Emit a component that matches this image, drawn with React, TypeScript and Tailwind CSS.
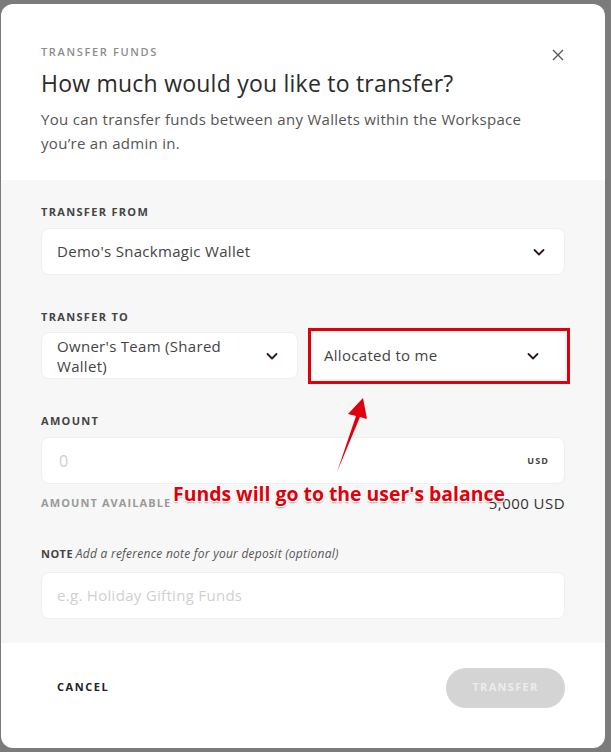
import React from 'react';

const font = { fontFamily: '"Open Sans", "Liberation Sans", sans-serif' };

const Chevron = () => (
  <svg width="14" height="14" viewBox="0 0 14 14" fill="none" className="shrink-0">
    <path d="M2.5 5l4.5 4.5L11.5 5" stroke="#2a1a1a" strokeWidth="1.8" strokeLinecap="round" strokeLinejoin="round" />
  </svg>
);

const Label: React.FC<{ children: React.ReactNode }> = ({ children }) => (
  <div className="text-[11px] font-bold tracking-[0.12em] text-[#444] leading-none">{children}</div>
);

const App: React.FC = () => {
  return (
    <div className="w-[611px] h-[752px] bg-[#7b7b7b] pt-[4px] pl-[1px] overflow-hidden" style={font}>
      <div className="relative w-[604px] h-[744px] bg-white rounded-[12px] overflow-hidden flex flex-col">
        {/* header */}
        <div className="px-[40px] pt-[42px] h-[176px]">
          <div className="flex justify-between items-start">
            <div className="text-[11px] font-semibold tracking-[0.15em] text-[#8d8d8d] leading-none">TRANSFER FUNDS</div>
            <button className="mt-[3px] mr-[1px] text-[#555]">
              <svg width="12" height="12" viewBox="0 0 12 12">
                <path d="M1 1l10 10M11 1L1 11" stroke="#555" strokeWidth="1.3" />
              </svg>
            </button>
          </div>
          <h1 className="mt-[11px] text-[23px] font-medium text-[#2b2b2b] leading-none tracking-[0.01em]">
            How much would you like to transfer?
          </h1>
          <p className="mt-[12px] w-[500px] text-[15px] leading-[24px] text-[#555] tracking-[0.02em]">
            You can transfer funds between any Wallets within the Workspace you’re an admin in.
          </p>
        </div>

        {/* body */}
        <div className="bg-[#f7f7f7] px-[40px] pt-[26px] h-[463px]">
          <Label>TRANSFER FROM</Label>
          <div className="mt-[11px] h-[47px] bg-white rounded-[8px] border border-[#efefef] flex items-center justify-between pl-[15px] pr-[18px]">
            <span className="text-[15px] text-[#444] tracking-[0.02em]">Demo's Snackmagic Wallet</span>
            <Chevron />
          </div>

          <div className="mt-[36px]">
            <Label>TRANSFER TO</Label>
          </div>
          <div className="mt-[10px] flex gap-[11px]">
            <div className="w-[257px] h-[47px] bg-white rounded-[8px] border border-[#efefef] flex items-center justify-between pl-[15px] pr-[18px]">
              <span className="w-[180px] text-[15px] leading-[20px] text-[#444] tracking-[0.02em]">Owner's Team (Shared Wallet)</span>
              <Chevron />
            </div>
            <div className="relative flex-1 h-[47px] bg-white rounded-[8px] flex items-center justify-between pl-[15px] pr-[25px]">
              <div className="absolute -left-[1px] -top-[4px] -right-[5px] -bottom-[5px] border-[3px] border-[#e0000b]" />
              <span className="text-[15px] text-[#444] tracking-[0.02em]">Allocated to me</span>
              <Chevron />
            </div>
          </div>

          <div className="mt-[36px]">
            <Label>AMOUNT</Label>
          </div>
          <div className="mt-[11px] h-[47px] bg-white rounded-[8px] border border-[#efefef] flex items-center justify-between pl-[17px] pr-[15px]">
            <span className="text-[16px] text-[#cfcfcf]">0</span>
            <span className="text-[9px] font-bold tracking-[0.12em] text-[#444]">USD</span>
          </div>
          <div className="mt-[8px] flex justify-between items-center">
            <span className="text-[11px] font-bold tracking-[0.1em] text-[#9a9a9a]">AMOUNT AVAILABLE</span>
            <span className="text-[15px] text-[#333] tracking-[0.03em]">5,000 USD</span>
          </div>

          <div className="mt-[33px] text-[11px] leading-none text-[#444]">
            <span className="font-bold tracking-[0.04em]">NOTE</span>{' '}
            <span className="italic text-[12px] text-[#555] tracking-[0.02em]">Add a reference note for your deposit (optional)</span>
          </div>
          <div className="mt-[12px] h-[47px] bg-white rounded-[8px] border border-[#efefef] flex items-center pl-[15px]">
            <span className="text-[15px] text-[#d0d0d0] tracking-[0.02em]">e.g. Holiday Gifting Funds</span>
          </div>
        </div>

        {/* footer */}
        <div className="flex-1 flex items-center justify-between pl-[56px] pr-[40px] pb-[16px]">
          <button className="text-[11px] font-bold tracking-[0.14em] text-[#222]">CANCEL</button>
          <button className="w-[119px] h-[40px] rounded-full bg-[#d4d4d4] text-[11px] font-bold tracking-[0.12em] text-[#ececec]">
            TRANSFER
          </button>
        </div>

        {/* annotation */}
        <svg className="absolute left-0 top-0 pointer-events-none" width="604" height="744">
          <path d="M336 468 L355 412 L347 410 L362 394 L366 415 L359 413 Z" fill="#e0000b" />
        </svg>
        <div
          className="absolute left-[172px] top-[480px] text-[19.4px] font-bold text-[#e0000b] leading-none pointer-events-none"
          style={{
            fontFamily: '"Open Sans", sans-serif',
            textShadow: '1px 1px 0 #fff, -1px -1px 0 #fff, 1px -1px 0 #fff, -1px 1px 0 #fff, 0 2px 2px rgba(0,0,0,0.35)',
          }}
        >
          Funds will go to the user's balance
        </div>
      </div>
    </div>
  );
};

export default App;
